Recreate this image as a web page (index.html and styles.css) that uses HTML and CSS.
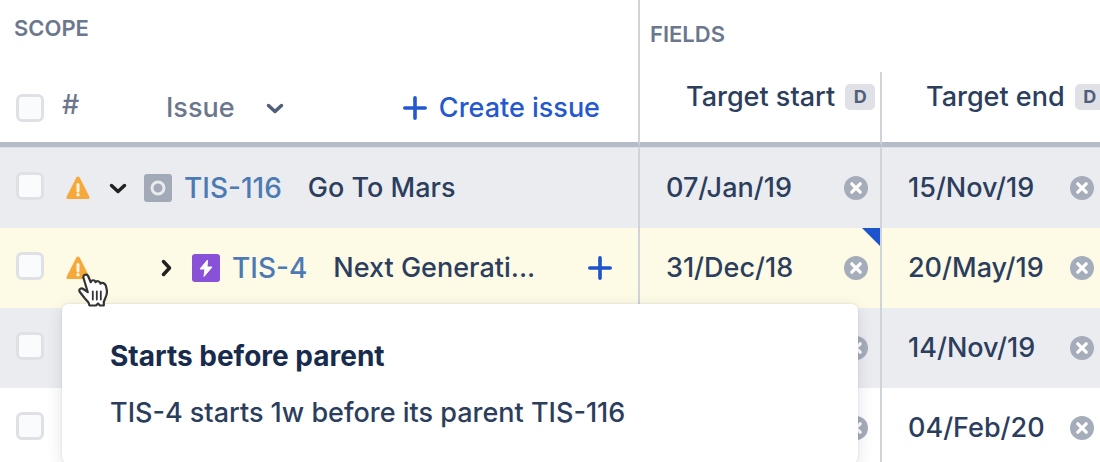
FILE: index.html
```html
<!DOCTYPE html>
<html lang="en">
<head>
    <meta charset="UTF-8">
    <meta name="viewport" content="width=device-width, initial-scale=1.0">
    <title>Roadmap</title>
    <link rel="stylesheet" href="styles.css">
</head>
<body>
    <!-- Shared icons -->
    <svg class="sprite" aria-hidden="true">
        <symbol id="warning" viewBox="0 0 24 24">
            <path d="M10.3 1.4a2 2 0 0 1 3.4 0L23.300 20.400a1.700 1.700 0 0 1-1.500 2.600H2.200a1.700 1.700 0 0 1-1.500-2.600z" fill="#f5a93b"/>
            <path d="M12 8.500v6.500" stroke="#fdf4e3" stroke-width="3" stroke-linecap="round"/>
            <circle cx="12" cy="18.800" r="1.700" fill="#fdf4e3"/>
        </symbol>
        <symbol id="chevron" viewBox="0 0 24 24">
            <path d="M5.500 9.500l6.500 6 6.500-6" fill="none" stroke="currentColor" stroke-width="3.500" stroke-linecap="round" stroke-linejoin="round"/>
        </symbol>
        <symbol id="plus" viewBox="0 0 24 24">
            <path d="M12 1.800v20.400M1.800 12h20.400" stroke="currentColor" stroke-width="3.600" stroke-linecap="round"/>
        </symbol>
        <symbol id="clear" viewBox="0 0 24 24">
            <circle cx="12" cy="12" r="12" fill="#a5adba"/>
            <path d="M7.800 7.800l8.400 8.400M16.200 7.800l-8.400 8.400" stroke="#fff" stroke-width="3.200" stroke-linecap="round"/>
        </symbol>
    </svg>

    <table class="plan">
        <colgroup>
            <col>
            <col class="col-start">
            <col class="col-end">
        </colgroup>
        <thead>
            <tr class="groups">
                <th class="scope">SCOPE</th>
                <th class="fields" colspan="2">FIELDS</th>
            </tr>
            <tr class="columns">
                <th>
                    <div class="scope-cell">
                        <input type="checkbox" class="check" aria-label="Select all issues">
                        <span class="number">#</span>
                        <button class="issue-menu">Issue <svg class="icon"><use href="#chevron"/></svg></button>
                        <button class="create"><svg class="icon"><use href="#plus"/></svg> Create issue</button>
                    </div>
                </th>
                <th><div class="field-name">Target start <span class="badge">D</span></div></th>
                <th><div class="field-name">Target end <span class="badge">D</span></div></th>
            </tr>
        </thead>
        <tbody>
            <tr class="shaded">
                <td>
                    <div class="scope-cell">
                        <input type="checkbox" class="check" aria-label="Select TIS-116">
                        <svg class="icon warning"><use href="#warning"/></svg>
                        <button class="toggle" aria-label="Collapse"><svg class="icon"><use href="#chevron"/></svg></button>
                        <svg class="type" viewBox="0 0 28 28">
                            <rect width="28" height="28" rx="3" fill="#a2aab7"/>
                            <circle cx="14" cy="14" r="6" fill="none" stroke="#e9ebee" stroke-width="3"/>
                        </svg>
                        <a href="#" class="key">TIS-116</a>
                        <span class="title">Go To Mars</span>
                    </div>
                </td>
                <td>
                    <div class="date-cell">07/Jan/19 <button class="clear" aria-label="Clear"><svg class="icon"><use href="#clear"/></svg></button></div>
                </td>
                <td>
                    <div class="date-cell">15/Nov/19 <button class="clear" aria-label="Clear"><svg class="icon"><use href="#clear"/></svg></button></div>
                </td>
            </tr>
            <tr class="active">
                <td>
                    <div class="scope-cell">
                        <input type="checkbox" class="check" aria-label="Select TIS-4">
                        <svg class="icon warning"><use href="#warning"/></svg>
                        <button class="toggle child closed" aria-label="Expand"><svg class="icon"><use href="#chevron"/></svg></button>
                        <svg class="type" viewBox="0 0 28 28">
                            <rect width="28" height="28" rx="3" fill="#8950d8"/>
                            <path d="M15.500 6L8 15h5l-1 7.500 8-9.500h-5z" fill="#fff" stroke="#fff" stroke-linejoin="round"/>
                        </svg>
                        <a href="#" class="key">TIS-4</a>
                        <span class="title">Next Generati...</span>
                        <button class="add" aria-label="Add child issue"><svg class="icon"><use href="#plus"/></svg></button>
                    </div>
                    <div class="tooltip" role="tooltip">
                        <strong>Starts before parent</strong>
                        <p>TIS-4 starts 1w before its parent TIS-116</p>
                    </div>
                    <svg class="pointer" viewBox="0 0 30 34">
                        <path d="M5.500 5C4.600 2 8.800 0.200 10.200 3.200L12.800 9.200C13.400 6.600 17 6.600 17.600 9.200C18.600 7.600 21.800 7.800 22.400 10.600C24 9.200 27 10 27.800 12.600L28.800 17C29.200 20 28.600 22.500 27.400 24.800L25.800 29V32.500H22L20 30.500L18 32.500H11.500L10.500 29.500L6.500 25L1.500 18.500C0.600 16.400 3.200 14.600 5.200 16L9.800 19.200Z" fill="#fff" stroke="#333" stroke-width="2.200" stroke-linejoin="round"/>
                        <path d="M14.800 18.500v8M18.800 18.500v8M22.800 18.500v8" stroke="#333" stroke-width="1.800" stroke-linecap="round"/>
                    </svg>
                </td>
                <td class="changed">
                    <div class="date-cell">31/Dec/18 <button class="clear" aria-label="Clear"><svg class="icon"><use href="#clear"/></svg></button></div>
                </td>
                <td>
                    <div class="date-cell">20/May/19 <button class="clear" aria-label="Clear"><svg class="icon"><use href="#clear"/></svg></button></div>
                </td>
            </tr>
            <tr class="shaded">
                <td>
                    <div class="scope-cell"><input type="checkbox" class="check" aria-label="Select issue"></div>
                </td>
                <td>
                    <div class="date-cell"><button class="clear" aria-label="Clear"><svg class="icon"><use href="#clear"/></svg></button></div>
                </td>
                <td>
                    <div class="date-cell">14/Nov/19 <button class="clear" aria-label="Clear"><svg class="icon"><use href="#clear"/></svg></button></div>
                </td>
            </tr>
            <tr>
                <td>
                    <div class="scope-cell"><input type="checkbox" class="check" aria-label="Select issue"></div>
                </td>
                <td>
                    <div class="date-cell"><button class="clear" aria-label="Clear"><svg class="icon"><use href="#clear"/></svg></button></div>
                </td>
                <td>
                    <div class="date-cell">04/Feb/20 <button class="clear" aria-label="Clear"><svg class="icon"><use href="#clear"/></svg></button></div>
                </td>
            </tr>
        </tbody>
    </table>
</body>
</html>
```
FILE: styles.css
```css
* {
    box-sizing: border-box;
}
body {
    margin: 0;
    overflow: hidden;
    background-color: #fff;
    color: #2c3e5d;
    font-family: Inter, sans-serif;
    font-size: 27px;
    font-weight: 450;
    line-height: 32px;
}
button {
    display: flex;
    align-items: center;
    padding: 0;
    border: none;
    background: none;
    color: inherit;
    font: inherit;
    cursor: pointer;
}
.sprite {
    display: none;
}
.icon {
    display: block;
    flex: none;
    width: 24px;
    height: 24px;
}

/* Table */
.plan {
    width: 100%;
    table-layout: fixed;
    border-collapse: separate;
    border-spacing: 0;
}
.col-start {
    width: 242px;
}
.col-end {
    width: 218px;
}
th,
td {
    padding: 0;
    border-right: 2px solid #cfd3da;
    font-weight: 450;
    text-align: left;
}
th:last-child,
td:last-child {
    border-right: none;
}
.groups th {
    height: 72px;
    color: #6b778c;
    font-size: 22px;
    font-weight: 600;
}
.groups .scope {
    padding: 0 14px 16px;
}
.groups .fields {
    padding: 0 10px 4px;
}
.columns th {
    height: 75px;
    border-bottom: 5px solid #b7bdc8;
}
td {
    position: relative;
    height: 80px;
}
tbody tr:first-child td {
    height: 81px;
    border-top: 1px solid #dcdfe5;
}
.shaded {
    background-color: #ebecf0;
}
.active {
    background-color: #fdfae5;
}

/* Scope column */
.scope-cell {
    display: flex;
    align-items: center;
    padding: 0 26px 0 16px;
    white-space: nowrap;
}
th .scope-cell {
    padding-top: 2px;
}
.check {
    appearance: none;
    flex: none;
    width: 28px;
    height: 28px;
    margin: 0;
    border: 3px solid #dfe1e6;
    border-radius: 6px;
    background-color: #fafbfc;
}
td .check {
    margin-bottom: 4px;
}
.number {
    width: 122px;
    padding-left: 18px;
    padding-bottom: 6px;
    color: #6b778c;
}
.issue-menu {
    gap: 28px;
    color: #6b778c;
}
.issue-menu .icon {
    color: #505f79;
}
.create {
    gap: 12px;
    margin-left: auto;
    margin-right: 12px;
    color: #2458cf;
}
.warning {
    margin-left: 22px;
}
.toggle {
    margin: 0 14px 0 16px;
    color: #222;
}
.toggle.child {
    margin-left: 64px;
}
.toggle.closed .icon {
    transform: rotate(-90deg);
}
.type {
    flex: none;
    width: 28px;
    height: 28px;
}
.key {
    margin: 0 26px 0 12px;
    color: #4c7ab5;
    font-size: 28px;
    text-decoration: none;
}
.add {
    margin-left: auto;
    color: #1d53cc;
}

/* Field columns */
.field-name {
    display: flex;
    align-items: center;
    gap: 10px;
    padding: 0 0 20px 46px;
    white-space: nowrap;
}
th:last-child .field-name {
    padding-left: 44px;
}
.badge {
    flex: none;
    width: 30px;
    border-radius: 5px;
    background-color: #dfe1e6;
    color: #505f79;
    font-size: 18px;
    font-weight: 700;
    line-height: 26px;
    text-align: center;
}
.date-cell {
    display: flex;
    align-items: center;
    min-height: 32px;
    padding: 0 12px 0 26px;
}
td:last-child .date-cell {
    padding-right: 6px;
}
.clear {
    margin-left: auto;
}
.changed::before {
    content: "";
    position: absolute;
    top: 0;
    right: 0;
    border-top: 18px solid #1d53cc;
    border-left: 18px solid transparent;
}

/* Warning details */
.tooltip {
    position: absolute;
    top: 76px;
    left: 62px;
    z-index: 1;
    width: 796px;
    padding: 36px 48px 34px;
    border-radius: 6px;
    background-color: #fff;
    box-shadow: 0 0 2px rgba(9, 30, 66, 0.15), 0 4px 16px rgba(9, 30, 66, 0.12);
}
.tooltip strong {
    color: #172b4d;
    font-size: 28px;
    font-weight: 700;
}
.tooltip p {
    margin: 24px 0 0;
}
.pointer {
    position: absolute;
    top: 45px;
    left: 78px;
    z-index: 2;
    width: 30px;
    height: 34px;
}
```
